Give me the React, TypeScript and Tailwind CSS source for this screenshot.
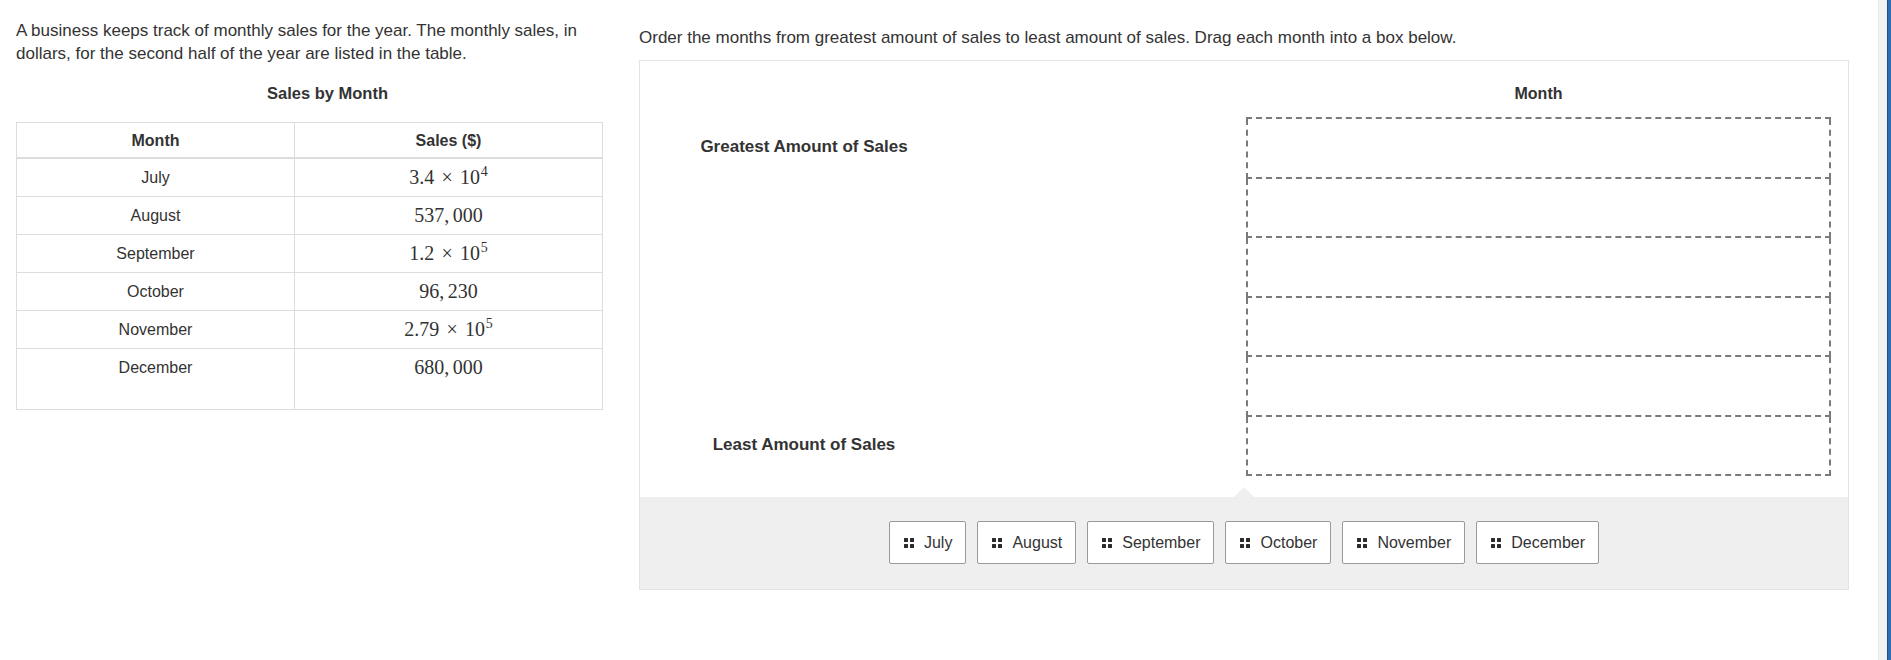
import React from 'react';

const sales = [
  { month: 'July', value: { m: '3.4', e: '4' } },
  { month: 'August', value: '537,000' },
  { month: 'September', value: { m: '1.2', e: '5' } },
  { month: 'October', value: '96,230' },
  { month: 'November', value: { m: '2.79', e: '5' } },
  { month: 'December', value: '680,000' },
];

const tiles = ['July', 'August', 'September', 'October', 'November', 'December'];

type Value = string | { m: string; e: string };

function MathValue({ value }: { value: Value }) {
  if (typeof value === 'string') {
    const [a, b] = value.split(',');
    return (
      <span className="font-['Liberation_Serif',serif] text-[20px]">
        {a},<span className="ml-[0.167em]">{b}</span>
      </span>
    );
  }
  return (
    <span className="font-['Liberation_Serif',serif] text-[20px]">
      {value.m}
      <span className="mx-[0.36em]">×</span>
      10<sup className="text-[0.7em] -top-[0.6em] ml-[0.05em]">{value.e}</sup>
    </span>
  );
}

function GripIcon() {
  return (
    <span className="grid grid-cols-2 gap-[2px] w-[10px] h-[10px] shrink-0">
      <span className="bg-[#2b2b2b] w-[4px] h-[4px] rounded-[0.5px]" />
      <span className="bg-[#2b2b2b] w-[4px] h-[4px] rounded-[0.5px]" />
      <span className="bg-[#2b2b2b] w-[4px] h-[4px] rounded-[0.5px]" />
      <span className="bg-[#2b2b2b] w-[4px] h-[4px] rounded-[0.5px]" />
    </span>
  );
}

export default function App() {
  return (
    <div className="flex h-[660px] bg-white text-[#333] text-[17px] leading-[23px] font-['Liberation_Sans',Arial,sans-serif]">
      <div className="flex-1 flex pl-[16px]">
        {/* Left column - stimulus */}
        <div className="w-[623px] shrink-0 pt-[19px]">
          <p className="pr-[24px]">
            A business keeps track of monthly sales for the year. The monthly sales, in dollars, for the second half of
            the year are listed in the table.
          </p>
          <div className="mt-[17px] text-center font-bold text-[16.5px]">Sales by Month</div>
          <table className="mt-[17px] w-[587px] border-collapse border border-[#ddd] table-fixed text-[16px]">
            <thead>
              <tr>
                <th className="w-[278px] border border-b-2 border-[#ddd] p-0 font-bold">
                  <div className="h-[34px] flex items-center justify-center">Month</div>
                </th>
                <th className="border border-b-2 border-[#ddd] p-0 font-bold">
                  <div className="h-[34px] flex items-center justify-center">Sales ($)</div>
                </th>
              </tr>
            </thead>
            <tbody>
              {sales.map((row, i) => {
                const last = i === sales.length - 1;
                return (
                  <tr key={row.month}>
                    <td className="border border-[#ddd] p-0 align-top text-center">
                      <div className={`h-[37px] flex items-center justify-center ${last ? 'mb-[23px]' : ''}`}>
                        {row.month}
                      </div>
                    </td>
                    <td className="border border-[#ddd] p-0 align-top text-center">
                      <div className="h-[37px] flex items-center justify-center">
                        <MathValue value={row.value} />
                      </div>
                    </td>
                  </tr>
                );
              })}
            </tbody>
          </table>
        </div>

        {/* Right column - ordering task */}
        <div className="w-[1210px] shrink-0 pt-[26px]">
          <p className="mb-[11px]">
            Order the months from greatest amount of sales to least amount of sales. Drag each month into a box below.
          </p>
          <div className="border border-[#e4e4e4]">
            <div className="grid grid-cols-[328px_1fr_585px] pr-[17px]">
              <div />
              <div />
              <div className="pt-[21px] pb-[12px] text-center font-bold text-[16px]">Month</div>
            </div>
            <div className="grid grid-cols-[328px_1fr_585px] pr-[17px] pb-[21px]">
              <div className="flex flex-col">
                <div className="h-[58px] flex items-center justify-center font-bold">Greatest Amount of Sales</div>
                <div className="flex-1" />
                <div className="h-[58px] mb-[3px] flex items-center justify-center font-bold">
                  Least Amount of Sales
                </div>
              </div>
              <div />
              <div className="border-t-2 border-dashed border-[#7a7a7a]">
                {tiles.map((t) => (
                  <div key={t} className="h-[59.5px] border-x-2 border-b-2 border-dashed border-[#7a7a7a]" />
                ))}
              </div>
            </div>

            {/* Tray */}
            <div className="relative bg-[#efefef] pt-[24px] pb-[25px] flex justify-center gap-[11px]">
              <span className="absolute left-1/2 -translate-x-1/2 -top-[10px] w-0 h-0 border-x-[10px] border-x-transparent border-b-[10px] border-b-[#efefef]" />
              {tiles.map((t) => (
                <button
                  key={t}
                  className="h-[43px] flex items-center gap-[10px] pl-[14px] pr-[13px] bg-white border border-[#9a9a9a] rounded-[2px] text-[#333] text-[16px] leading-[23px]"
                >
                  <GripIcon />
                  <span>{t}</span>
                </button>
              ))}
            </div>
          </div>
        </div>
      </div>

      {/* Window edge */}
      <div className="w-[9px] bg-[#f2f2f2] border-l border-[#e9e9e9]" />
      <div className="w-[4px] bg-[#2c6db4] border-l border-[#1f4f86]" />
    </div>
  );
}
